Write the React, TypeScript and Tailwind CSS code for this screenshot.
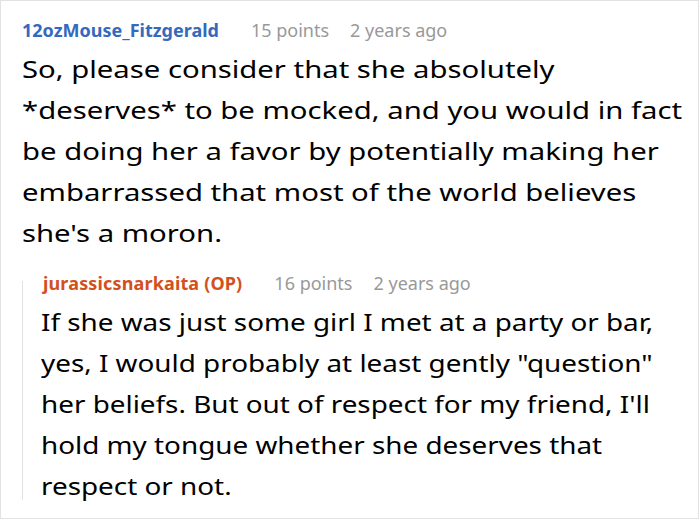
import React from 'react'

interface HeaderProps {
  author: string
  authorClass: string
  points: string
  age: string
}

function CommentHeader({ author, authorClass, points, age }: HeaderProps) {
  return (
    <div className="flex items-baseline gap-[21px] whitespace-nowrap text-[18px] leading-[24px]">
      <span className={`mr-[11px] font-bold ${authorClass}`}>{author}</span>
      <span className="text-[#999999]">{points}</span>
      <span className="text-[#999999]">{age}</span>
    </div>
  )
}

function Body({ lines, scaleClass }: { lines: string[]; scaleClass: string }) {
  return (
    <div className={`origin-left text-[24px] leading-[41px] ${scaleClass}`}>
      {lines.map((line) => (
        <div key={line} className="whitespace-nowrap">
          {line}
        </div>
      ))}
    </div>
  )
}

export default function App() {
  return (
    <div className="h-[520px] w-[700px] overflow-hidden bg-white font-['Noto_Sans',sans-serif] text-black">
      <div className="flex h-[519px] w-[699px] flex-col border border-[#e2e2e2] pl-[21px] pt-[17px]">
        <CommentHeader
          author="12ozMouse_Fitzgerald"
          authorClass="text-[#3569bd]"
          points="15 points"
          age="2 years ago"
        />
        <div className="mt-[6px]">
          <Body
            scaleClass="scale-x-[1.22]"
            lines={[
              'So, please consider that she absolutely',
              '*deserves* to be mocked, and you would in fact',
              'be doing her a favor by potentially making her',
              'embarrassed that most of the world believes',
              "she's a moron.",
            ]}
          />
        </div>

        <div className="mt-[18px] flex">
          <div className="mb-[6px] mt-[10px] w-px bg-[#e2e2e2]" />
          <div className="flex flex-col pl-[18px]">
            <div className="ml-[2px]">
              <CommentHeader
                author="jurassicsnarkaita (OP)"
                authorClass="text-[#d2501d] tracking-[0.15px]"
                points="16 points"
                age="2 years ago"
              />
            </div>
            <div className="mt-[6px]">
              <Body
                scaleClass="scale-x-[1.16]"
                lines={[
                  'If she was just some girl I met at a party or bar,',
                  'yes, I would probably at least gently "question"',
                  "her beliefs. But out of respect for my friend, I'll",
                  'hold my tongue whether she deserves that',
                  'respect or not.',
                ]}
              />
            </div>
          </div>
        </div>
      </div>
    </div>
  )
}
